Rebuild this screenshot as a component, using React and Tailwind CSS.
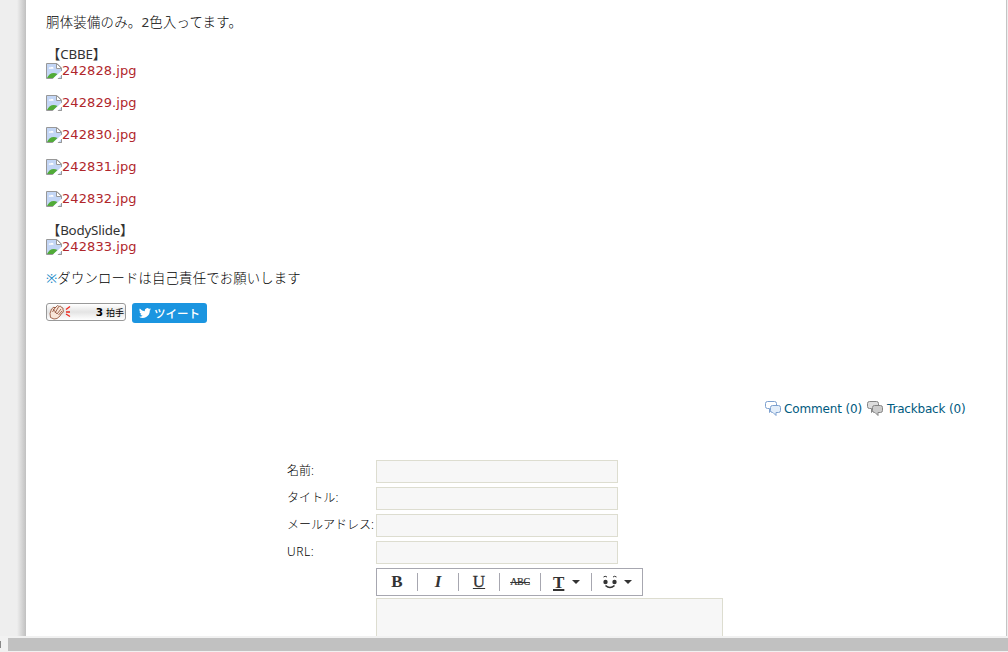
import React from 'react';

const firstImages = ['242828.jpg', '242829.jpg', '242830.jpg', '242831.jpg', '242832.jpg'];

const fields = [
  { id: 'name', label: '名前:', track: '' },
  { id: 'title', label: 'タイトル:', track: 'tracking-[0.1px]' },
  { id: 'mail', label: 'メールアドレス:', track: '' },
  { id: 'url', label: 'URL:', track: 'tracking-[0.6px]' },
];

const BrokenImage = () => (
  <svg className="h-4 w-4 shrink-0" viewBox="0 0 16 16">
    <path d="M.5 .5h10.5l4.500 4.500v10.500h-15z" fill="#c3d6f6" stroke="#989898" />
    <path d="M2.800 5.800c-.2-1.600 1.400-2 2-1.200.8-1.500 3-.6 2.800 1.200z" fill="#fff" />
    <path d="M1 15c2-4.500 6-6.500 10.500-4l-4 4z" fill="#51ab38" />
    <path d="M16 7.500v4l-4.500 4.500h-5z" fill="#fff" />
    <path d="M12.500 15.500h3v-3" fill="none" stroke="#989898" />
    <path d="M10.500 .5v5h5z" fill="#fff" stroke="#989898" />
  </svg>
);

const ImageLink = ({ name }) => (
  <a href="#" className="relative top-px flex h-4 items-center text-[#b0262b]">
    <BrokenImage />
    <span className="tracking-[0.08px] font-['DejaVu_Sans'] text-[13px] leading-4">{name}</span>
  </a>
);

const Hand = () => (
  <svg className="h-4 w-6" viewBox="0 0 24 16">
    <path d="M2.500 13.500l-.5-4 1.500-4.500 2.500-2 1 1 2.500-2.500 1.500 1 1.500-.5 1 1.500 1.500.5v2l.5 1-1 2-1.500 1-1 2-3 2.500-3 .5z" fill="#f9e6d9" stroke="#9a5a42" strokeWidth=".9" />
    <path d="M4.500 8l3-5M7 9l3.500-6M9 10l4-5M10.500 11l3.500-4M5 5l4 5" stroke="#8b4a33" strokeWidth=".8" fill="none" />
    <path d="M18 5.500l4-3M18 8h4M18 10l4 2.500" stroke="#f0281e" strokeWidth="1.300" />
  </svg>
);

const Bubbles = ({ stroke, back, front }) => (
  <svg className="h-4 w-4 shrink-0" viewBox="0 0 16 16" stroke={stroke} strokeLinejoin="round">
    <path d="M2.500 .5h7q2 0 2 2v3q0 2-2 2h-2l-3 4v-4h-2q-2 0-2-2v-3q0-2 2-2z" fill={back} />
    <path d="M7.500 4.500h6q2 0 2 2v3q0 2-2 2h-2.500v3l-3-3h-.5q-2 0-2-2v-3q0-2 2-2z" fill={front} />
  </svg>
);

const Caret = () => (
  <svg className="h-1 w-2" viewBox="0 0 8 4">
    <path d="M0 0h8l-4 4z" fill="#333" />
  </svg>
);

const Smile = () => (
  <svg className="h-[14px] w-[14px]" viewBox="0 0 14 14">
    <path d="M.5 2q1.500-1.500 3.500 0M10 2q1.500-1.500 3.500 0" stroke="#333" fill="none" />
    <circle cx="2.500" cy="7" r="2.200" fill="#333" />
    <circle cx="11.500" cy="7" r="2.200" fill="#333" />
    <path d="M2.500 10.500q4.500 4 9 0" stroke="#333" strokeWidth="1.600" fill="none" />
  </svg>
);

const Toolbar = () => (
  <div className="mt-1 flex h-7 w-[267px] items-center border border-[#a7a7b0] bg-white font-['Liberation_Serif'] text-[17px] leading-none text-[#333]">
    <button className="h-[18px] w-[41px] border-r border-[#a7a7b0] font-bold leading-[18px]">B</button>
    <button className="h-[18px] w-[41px] border-r border-[#a7a7b0] font-bold italic leading-[18px]">I</button>
    <button className="h-[18px] w-[41px] border-r border-[#a7a7b0] leading-[18px] underline [-webkit-text-stroke:0.3px_#333]">U</button>
    <button className="h-[18px] w-[41px] border-r border-[#a7a7b0] text-[10px] leading-[18px] tracking-[-0.3px] line-through [-webkit-text-stroke:0.2px_#333]">ABC</button>
    <button className="flex h-[18px] w-[51px] items-center gap-2 border-r border-[#a7a7b0] pl-3">
      <span className="font-bold underline decoration-2">T</span>
      <Caret />
    </button>
    <button className="flex h-[18px] items-center gap-[7px] pl-[11px]">
      <Smile />
      <Caret />
    </button>
  </div>
);

const App = () => {
  return (
    <div className="flex h-[652px] w-[1008px] flex-col overflow-hidden bg-[#eee] font-['DejaVu_Sans','Noto_Sans_CJK_JP',sans-serif] text-[#333]">
      <div className="flex h-[636px] overflow-hidden">
        <div className="flex w-[26px] shrink-0 justify-end">
          <div className="w-[9px] bg-linear-to-r from-[#eee] to-[#c0c0c0]" />
        </div>
        <main className="w-[981px] shrink-0 border-r border-[#c4c4c4] bg-white pl-5 pt-[14px]">
          <div className="font-['Noto_Sans','Noto_Sans_CJK_JP',sans-serif] text-[13.33px] leading-4">
            <p className="font-light tracking-[0.3px] text-black">胴体装備のみ。<span className="font-normal text-[#333]">2</span>色入ってます。</p>
            <p className="mt-4 pl-px tracking-[-0.15px]">【CBBE】</p>
            <div className="flex flex-col gap-4">
              {firstImages.map((name) => (
                <ImageLink key={name} name={name} />
              ))}
            </div>
            <p className="mt-4 pl-px tracking-[-0.2px]">【BodySlide】</p>
            <ImageLink name="242833.jpg" />
            <p className="mt-4 font-light tracking-[0.2px] text-black">
              <span className="font-normal text-[#1a8ac8]">※</span>ダウンロードは自己責任でお願いします
            </p>
          </div>

          <div className="mt-[17px] flex h-5 gap-[6px]">
            <button className="flex h-[18px] w-20 items-center justify-between rounded-[3px] border border-[#999] bg-linear-to-b from-white via-[#e4e4e4] to-white pl-px pr-px">
              <Hand />
              <span className="flex items-center gap-[3px] pt-px text-black">
                <b className="font-['DejaVu_Sans'] text-[10.5px]">3</b>
                <span className="text-[9px] leading-3">拍手</span>
              </span>
            </button>
            <button className="flex h-5 w-[75px] items-center gap-[3px] rounded-[3px] bg-[#1b95e0] pl-[7px] text-white">
              <svg className="h-3 w-3" viewBox="0 0 24 24" fill="currentColor">
                <path d="M24 4.600a10 10 0 0 1-2.800.8 5 5 0 0 0 2.100-2.700 10 10 0 0 1-3.100 1.200 4.900 4.900 0 0 0-8.400 4.500A14 14 0 0 1 1.700 3.100a4.900 4.900 0 0 0 1.500 6.600 5 5 0 0 1-2.200-.6v.1a4.900 4.900 0 0 0 3.900 4.800 5 5 0 0 1-2.200.1 4.900 4.900 0 0 0 4.600 3.400A9.900 9.900 0 0 1 0 19.500a14 14 0 0 0 21.500-12.400A10 10 0 0 0 24 4.600z" />
              </svg>
              <span className="-mt-px font-['Noto_Sans_CJK_JP'] text-[11.5px] font-medium leading-5">ツイート</span>
            </button>
          </div>

          <div className="mt-[78px] flex h-4 items-center justify-end pr-10 text-xs leading-4 text-[#005a80]">
            <Bubbles stroke="#7da0cf" back="#fff" front="#e3eefa" />
            <span className="ml-[3px] w-[83px] tracking-[-0.15px]">Comment (0)</span>
            <Bubbles stroke="#858585" back="#ddd" front="#ccc" />
            <span className="ml-1 w-[79px] whitespace-nowrap tracking-[-0.18px]">Trackback (0)</span>
          </div>

          <form className="ml-[241px] mt-[43px] grid grid-cols-[89px_1fr] gap-y-1 text-xs">
            {fields.map(({ id, label, track }) => (
              <React.Fragment key={id}>
                <label htmlFor={id} className={`h-[23px] whitespace-nowrap font-['Noto_Sans','Noto_Sans_CJK_JP',sans-serif] font-light leading-[21px] text-black ${track}`}>{label}</label>
                <input id={id} className="h-[23px] w-[242px] border border-[#ddddd0] bg-[#f7f7f7]" />
              </React.Fragment>
            ))}
            <div className="col-start-2">
              <div className="-mt-1">
                <Toolbar />
              </div>
              <textarea className="mt-[2px] block h-24 w-[347px] resize-none border border-[#ddddd0] bg-[#f7f7f7]" />
            </div>
          </form>
        </main>
      </div>
      <div className="flex h-4 items-center bg-[#f1f1f1]">
        <div className="h-[7px] w-px bg-[#888]" />
        <div className="ml-[7px] h-[13px] flex-1 bg-[#c1c1c1]" />
      </div>
    </div>
  );
};

export default App;
